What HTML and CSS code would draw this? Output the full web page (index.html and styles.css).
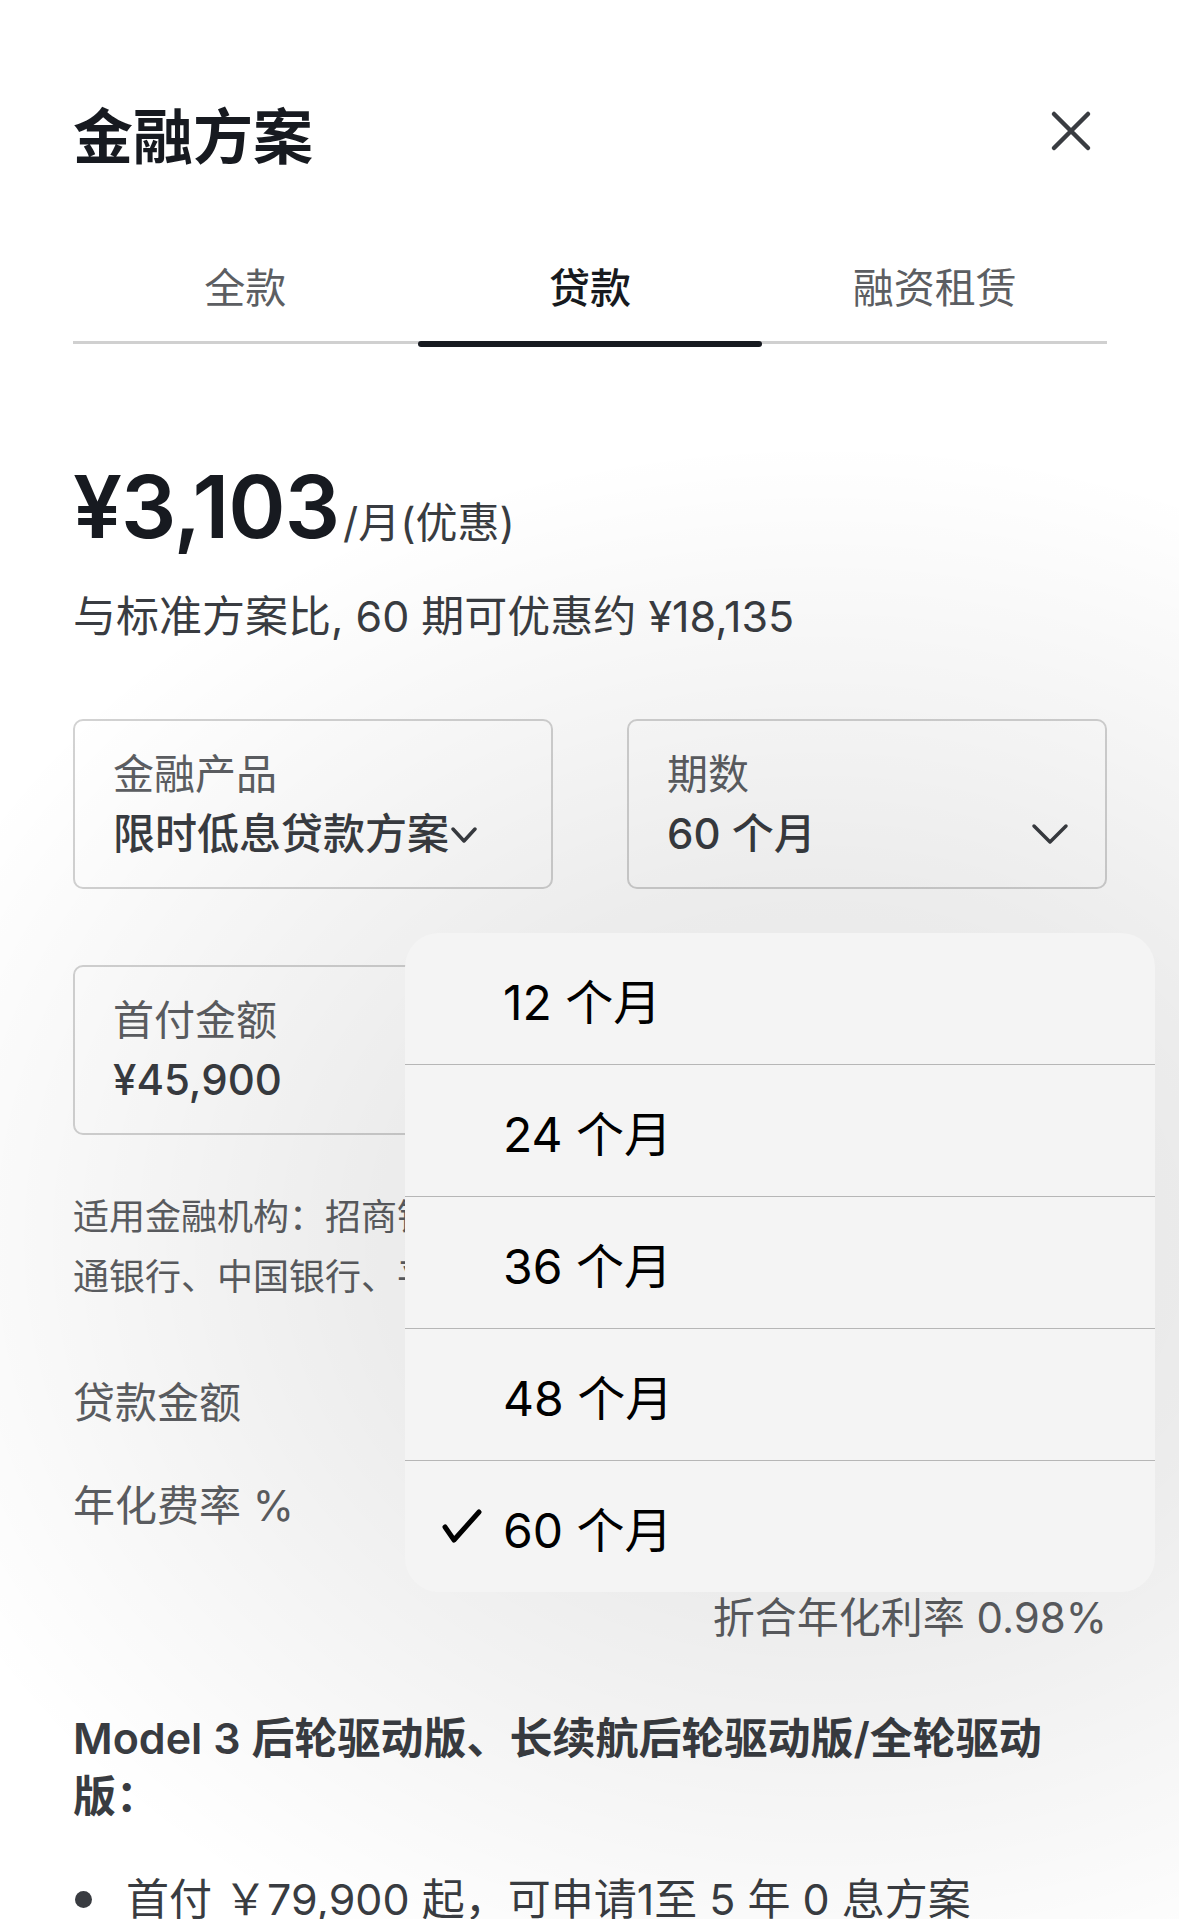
FILE: index.html
```html
<!DOCTYPE html>
<html lang="zh-CN">
<head>
    <meta charset="UTF-8">
    <meta name="viewport" content="width=device-width, initial-scale=1.0">
    <title>金融方案</title>
    <link rel="stylesheet" href="styles.css">
</head>
<body>
    <div class="sheet">
        <div class="header">
            <h1>金融方案</h1>
            <button class="close" aria-label="关闭">
                <svg width="42" height="42" viewBox="0 0 42 42">
                    <path d="M4 4 L38 38 M38 4 L4 38" stroke="#393c41" stroke-width="4.5" stroke-linecap="round" fill="none"/>
                </svg>
            </button>
        </div>

        <div class="tabs">
            <div class="tab">全款</div>
            <div class="tab active">贷款</div>
            <div class="tab">融资租赁</div>
        </div>

        <div class="price">
            <span class="amount">¥3,103</span><span class="unit">/月(优惠)</span>
        </div>
        <p class="saving">与标准方案比, 60 期可优惠约 ¥18,135</p>

        <div class="fields">
            <div class="field">
                <div class="label">金融产品</div>
                <div class="value">
                    <span>限时低息贷款方案</span>
                    <svg class="chevron small" width="26" height="18" viewBox="0 0 26 18">
                        <polyline points="2,3 13,15 24,3" fill="none" stroke="#393c41" stroke-width="3.5" stroke-linecap="round" stroke-linejoin="round"/>
                    </svg>
                </div>
            </div>
            <div class="field">
                <div class="label">期数</div>
                <div class="value">
                    <span class="grow">60 个月</span>
                    <svg class="chevron" width="38" height="22" viewBox="0 0 38 22">
                        <polyline points="3,3 19,19 35,3" fill="none" stroke="#393c41" stroke-width="3.5" stroke-linecap="round" stroke-linejoin="round"/>
                    </svg>
                </div>
            </div>
            <div class="field">
                <div class="label">首付金额</div>
                <div class="value"><span>¥45,900</span></div>
            </div>
            <div class="field">
                <div class="label">首付比例</div>
                <div class="value"><span>15%</span></div>
            </div>
        </div>

        <p class="lenders">适用金融机构：招商银行、中信银行、建设银行、工商银行、交通银行、中国银行、平安银行、浦发银行</p>

        <div class="row">
            <span>贷款金额</span>
            <span class="row-value">¥260,000</span>
        </div>
        <div class="row rate">
            <span>年化费率 %</span>
            <span class="row-value">0.50</span>
        </div>
        <p class="apr">折合年化利率 0.98%</p>

        <h3 class="model">Model 3 后轮驱动版、长续航后轮驱动版/全轮驱动版：</h3>
        <ul class="offers">
            <li>首付 ￥79,900 起，可申请1至 5 年 0 息方案</li>
        </ul>

        <!-- 菜单弹出时页面上的阴影 -->
        <div class="shade"></div>

        <!-- 期数下拉菜单 -->
        <div class="menu">
            <div class="menu-item"><span class="check"></span>12 个月</div>
            <div class="menu-item"><span class="check"></span>24 个月</div>
            <div class="menu-item"><span class="check"></span>36 个月</div>
            <div class="menu-item"><span class="check"></span>48 个月</div>
            <div class="menu-item">
                <span class="check">
                    <svg width="40" height="35" viewBox="0 0 40 35">
                        <polyline points="3,18 12,31 37,3" fill="none" stroke="#000" stroke-width="5" stroke-linecap="round" stroke-linejoin="round"/>
                    </svg>
                </span>60 个月
            </div>
        </div>
    </div>
</body>
</html>
```

FILE: styles.css
```css
body {
    margin: 0;
    background: #fff;
    font-family: Inter, "Noto Sans CJK SC", sans-serif;
    color: #393c41;
}
.sheet {
    position: relative;
    padding: 0 72px 0 73px;
    overflow: hidden;
}
.header {
    display: flex;
    justify-content: space-between;
    align-items: flex-start;
    padding-top: 107px;
}
h1 {
    margin: 0;
    font-size: 60px;
    line-height: 60px;
    font-weight: 600;
    color: #171a20;
}
.close {
    margin: 3px 15px 0 0;
    padding: 0;
    border: none;
    background: none;
    width: 42px;
    height: 42px;
}
.tabs {
    display: flex;
    margin-top: 81px;
    border-bottom: 3px solid #d0d0d0;
}
.tab {
    position: relative;
    flex: 1;
    text-align: center;
    font-size: 41px;
    line-height: 80px;
    padding-bottom: 13px;
    color: #5c5e62;
}
.tab.active {
    color: #171a20;
    font-weight: 500;
}
.tab.active::after {
    content: "";
    position: absolute;
    left: 0;
    right: 0;
    top: 100%;
    height: 6px;
    border-radius: 3px;
    background: #171a20;
}
.price {
    margin-top: 113px;
    line-height: 100px;
    height: 100px;
}
.amount {
    font-size: 87px;
    font-weight: 600;
    color: #171a20;
    letter-spacing: -1px;
}
.unit {
    font-size: 42px;
    color: #393c41;
    margin-left: 4px;
}
.saving {
    margin: 29px 0 0;
    font-size: 43px;
    line-height: 60px;
}
.fields {
    display: grid;
    grid-template-columns: 1fr 1fr;
    column-gap: 74px;
    row-gap: 76px;
    margin-top: 73px;
}
.field {
    height: 170px;
    box-sizing: border-box;
    border: 2px solid #d2d2d2;
    border-radius: 10px;
    padding: 0 38px;
    display: flex;
    flex-direction: column;
    justify-content: center;
}
.label {
    font-size: 41px;
    line-height: 60px;
    color: #5c5e62;
}
.value {
    display: flex;
    align-items: center;
    font-size: 42px;
    line-height: 60px;
    font-weight: 500;
    color: #393c41;
}
.value .grow {
    flex: 1;
}
.chevron {
    margin-right: -2px;
}
.chevron.small {
    margin: 2px 0 0 2px;
}
.lenders {
    margin: 52px 0 0;
    font-size: 36px;
    line-height: 60px;
    color: #5c5e62;
}
.row {
    display: flex;
    justify-content: space-between;
    margin-top: 66px;
    font-size: 42px;
    line-height: 60px;
    color: #5c5e62;
}
.row.rate {
    margin-top: 43px;
}
.row-value {
    color: #393c41;
}
.apr {
    margin: 52px 0 0;
    text-align: right;
    font-size: 42px;
    line-height: 60px;
    color: #5c5e62;
}
.model {
    margin: 61px 0 0;
    font-size: 43px;
    line-height: 58px;
    font-weight: 600;
    color: #393c41;
}
.offers {
    margin: 44px 0 0;
    padding: 0;
    list-style: none;
    font-size: 43px;
    line-height: 60px;
}
.offers li {
    display: flex;
    align-items: center;
}
.offers li::before {
    content: "";
    flex-shrink: 0;
    width: 17px;
    height: 17px;
    border-radius: 50%;
    background: #393c41;
    margin: 0 34px 0 2px;
}
.shade {
    position: absolute;
    inset: 0;
    pointer-events: none;
    background: radial-gradient(ellipse 980px 800px at 820px 1240px, rgba(0, 0, 0, 0.11) 0%, rgba(0, 0, 0, 0.075) 45%, rgba(0, 0, 0, 0) 100%);
}
.menu {
    position: absolute;
    left: 405px;
    top: 933px;
    width: 750px;
    background: #f4f4f4;
    border-radius: 34px;
    overflow: hidden;
}
.menu-item {
    display: flex;
    align-items: center;
    height: 131px;
    padding-left: 37px;
    font-size: 48px;
    color: #000;
    border-top: 1px solid #b6b6b6;
}
.menu-item:first-child {
    border-top: none;
}
.check {
    width: 61px;
    display: flex;
    align-items: center;
}
```
